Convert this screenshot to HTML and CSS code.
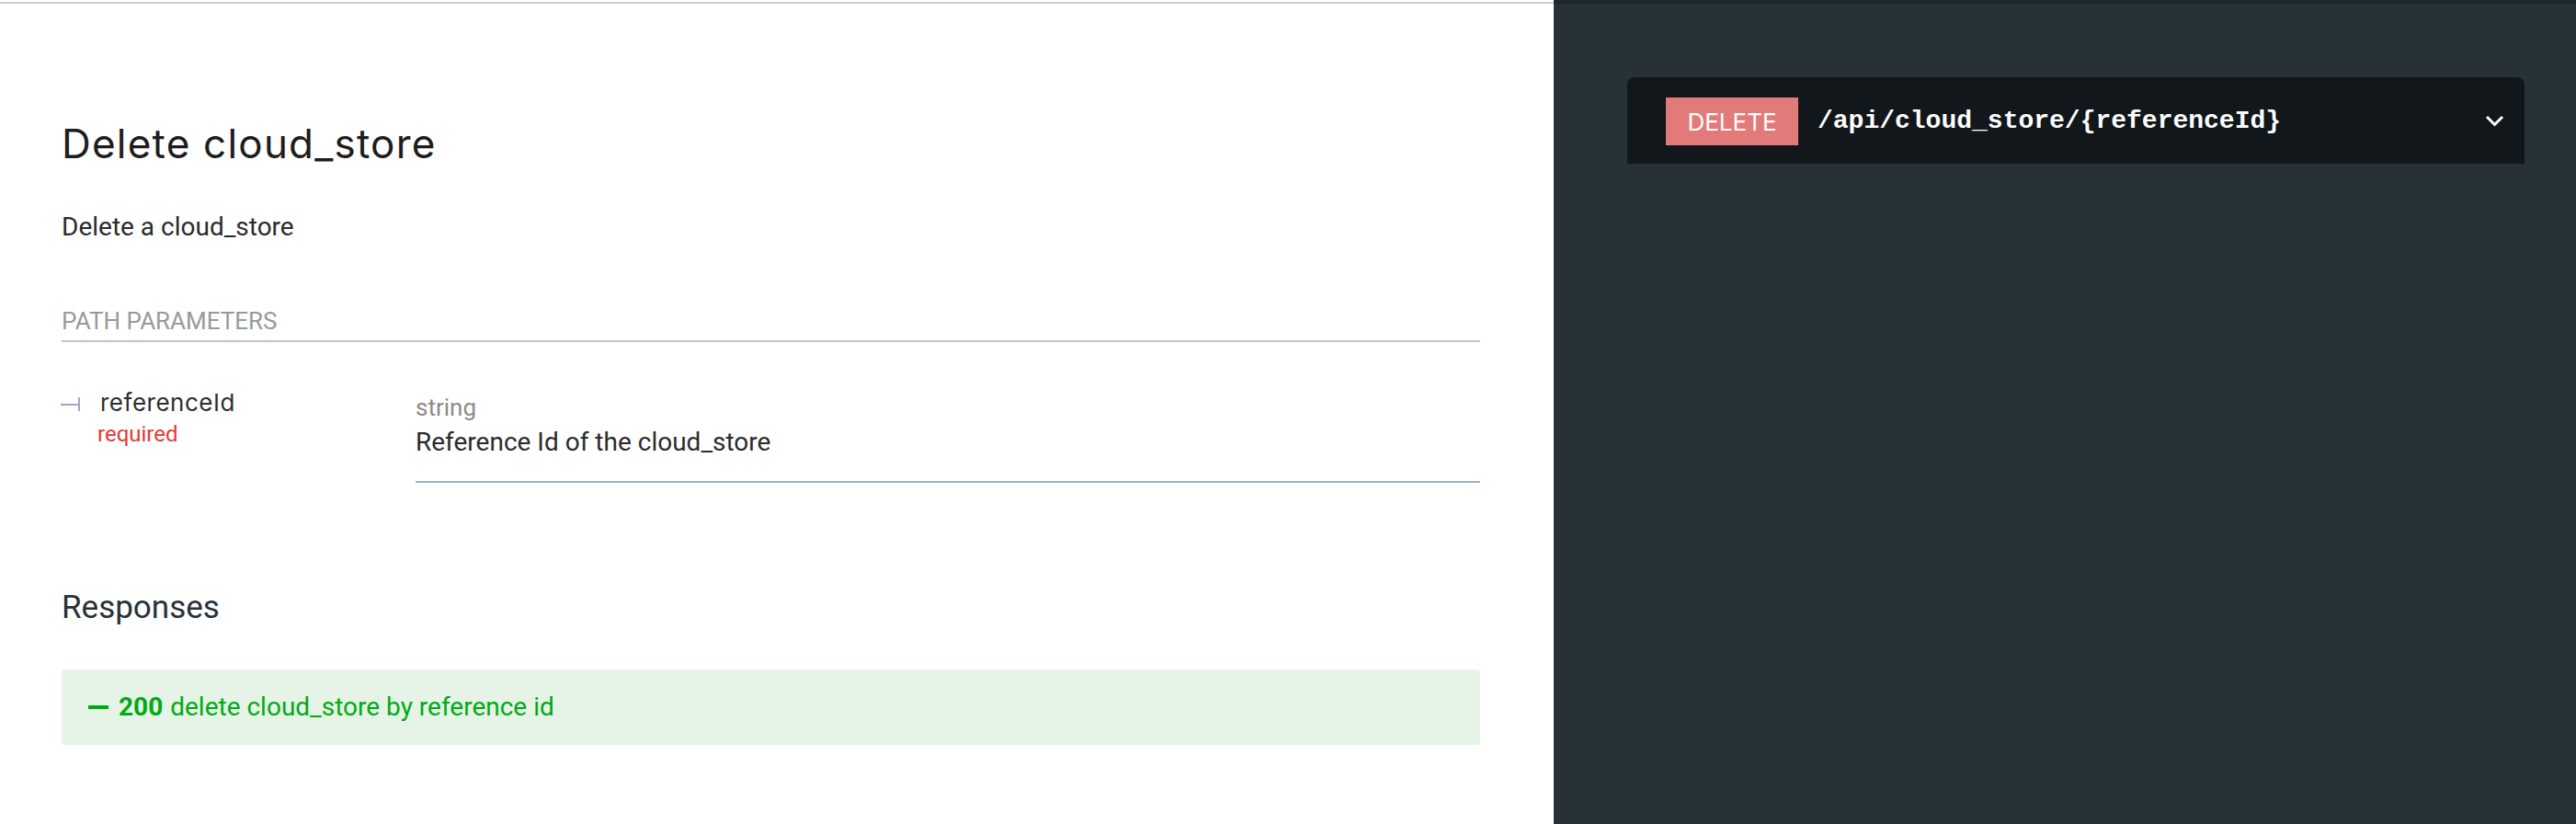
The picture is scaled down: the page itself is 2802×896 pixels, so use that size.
FILE: index.html
```html
<!DOCTYPE html>
<html lang="en">
<head>
<meta charset="utf-8">
<title>Delete cloud_store</title>
<link rel="stylesheet" href="styles.css">
</head>
<body>
<div class="page">
  <main class="middle">
    <div class="top-rule"></div>
    <h2 class="op-title">Delete cloud_store</h2>
    <p class="op-desc">Delete a cloud_store</p>

    <div class="params-header">Path parameters</div>
    <div class="param-row">
      <div class="param-name-col">
        <div class="param-name"><span class="tee"></span><span class="name-text">referenceId</span></div>
        <div class="param-required">required</div>
      </div>
      <div class="param-info-col">
        <div class="param-type">string</div>
        <div class="param-text">Reference Id of the cloud_store</div>
      </div>
    </div>

    <h3 class="responses-title">Responses</h3>
    <div class="response ok">
      <span class="resp-dash"></span><strong class="resp-code">200</strong><span class="resp-text">delete cloud_store by reference id</span>
    </div>
  </main>
  <aside class="right">
    <div class="endpoint">
      <span class="verb">DELETE</span>
      <span class="path">/api/cloud_store/{referenceId}</span>
      <svg class="chevron" width="21" height="13" viewBox="0 0 21 13"><polyline points="2,2 10.5,10.5 19,2" fill="none" stroke="#ffffff" stroke-width="3"/></svg>
    </div>
  </aside>
</div>
</body>
</html>
```

FILE: styles.css
```css
html, body {
  margin: 0;
  padding: 0;
  height: 100%;
  background: #ffffff;
}

body {
  font-family: Roboto, "Liberation Sans", sans-serif;
  color: #333333;
}

.page {
  display: flex;
  height: 896px;
}

.middle {
  width: 1690px;
  box-sizing: border-box;
  padding: 0 80px 0 67px;
}

.top-rule {
  height: 2px;
  margin: 2px -80px 0 -67px;
  background: #cccccc;
}

.op-title {
  margin: 124px 0 0;
  font-family: Inter, "Noto Sans", sans-serif;
  font-weight: 400;
  font-size: 44px;
  line-height: 56px;
  letter-spacing: 1.2px;
  color: #1d1d1d;
}

.op-desc {
  margin: 43px 0 0;
  font-size: 28px;
  line-height: 40px;
  color: #2b2b2b;
}

.params-header {
  margin-top: 64px;
  font-size: 26px;
  line-height: 36px;
  text-transform: uppercase;
  color: #969a9f;
  padding-bottom: 3px;
  border-bottom: 2px solid #c0c4c7;
}

.param-row {
  display: flex;
  padding-top: 48px;
}

.param-name-col {
  width: 385px;
  flex: none;
}

.param-name {
  display: flex;
  align-items: center;
  font-family: Inter, "Noto Sans", sans-serif;
  font-size: 26px;
  line-height: 36px;
  letter-spacing: 0.5px;
  color: #2e2e2e;
}

.tee {
  position: relative;
  width: 21px;
  height: 2px;
  margin: 3px 22px 0 -1px;
  background: #a4a3c7;
}

.tee::after {
  content: "";
  position: absolute;
  right: 0;
  top: -7px;
  width: 2px;
  height: 15px;
  background: #a4a3c7;
}

.param-required {
  padding-left: 39px;
  font-size: 24px;
  line-height: 32px;
  color: #e53935;
}

.param-info-col {
  flex: 1;
  margin-top: 5px;
  padding-bottom: 22px;
  border-bottom: 2px solid #9fb3bf;
}

.param-type {
  font-size: 26px;
  line-height: 36px;
  color: #8b8b8b;
}

.param-text {
  font-size: 28px;
  line-height: 40px;
  color: #2b2b2b;
}

.responses-title {
  margin: 112px 0 0;
  font-weight: 400;
  font-size: 35px;
  line-height: 48px;
  color: #263238;
}

.response {
  margin-top: 43px;
  height: 82px;
  box-sizing: border-box;
  padding: 0 0 0 29px;
  border-radius: 4px;
  font-size: 28px;
  line-height: 40px;
  display: flex;
  align-items: center;
}

.response.ok {
  background: #e5f4e6;
  color: #00aa13;
}

.resp-dash {
  flex: none;
  width: 22px;
  height: 4px;
  background: #00aa13;
  margin-right: 11px;
}

.resp-code {
  font-weight: 700;
  margin-right: 8px;
}

.right {
  flex: 1;
  background: #263238;
  border-top: 4px solid #1e272c;
  padding: 80px 56px 0 80px;
}

.endpoint {
  display: flex;
  align-items: center;
  height: 94px;
  padding: 0 22px 0 42px;
  background: #11171a;
  border-radius: 8px 8px 0 0;
}

.verb {
  flex: none;
  height: 52px;
  width: 144px;
  display: flex;
  align-items: center;
  justify-content: center;
  background: #e27a7a;
  color: #ffffff;
  font-family: Inter, "Noto Sans", sans-serif;
  font-size: 26px;
  font-weight: 400;
  margin-top: 2px;
}

.path {
  flex: 1;
  margin-left: 21px;
  font-family: "Liberation Mono", monospace;
  font-weight: 700;
  font-size: 28px;
  color: #ffffff;
}

.chevron {
  flex: none;
}
```
